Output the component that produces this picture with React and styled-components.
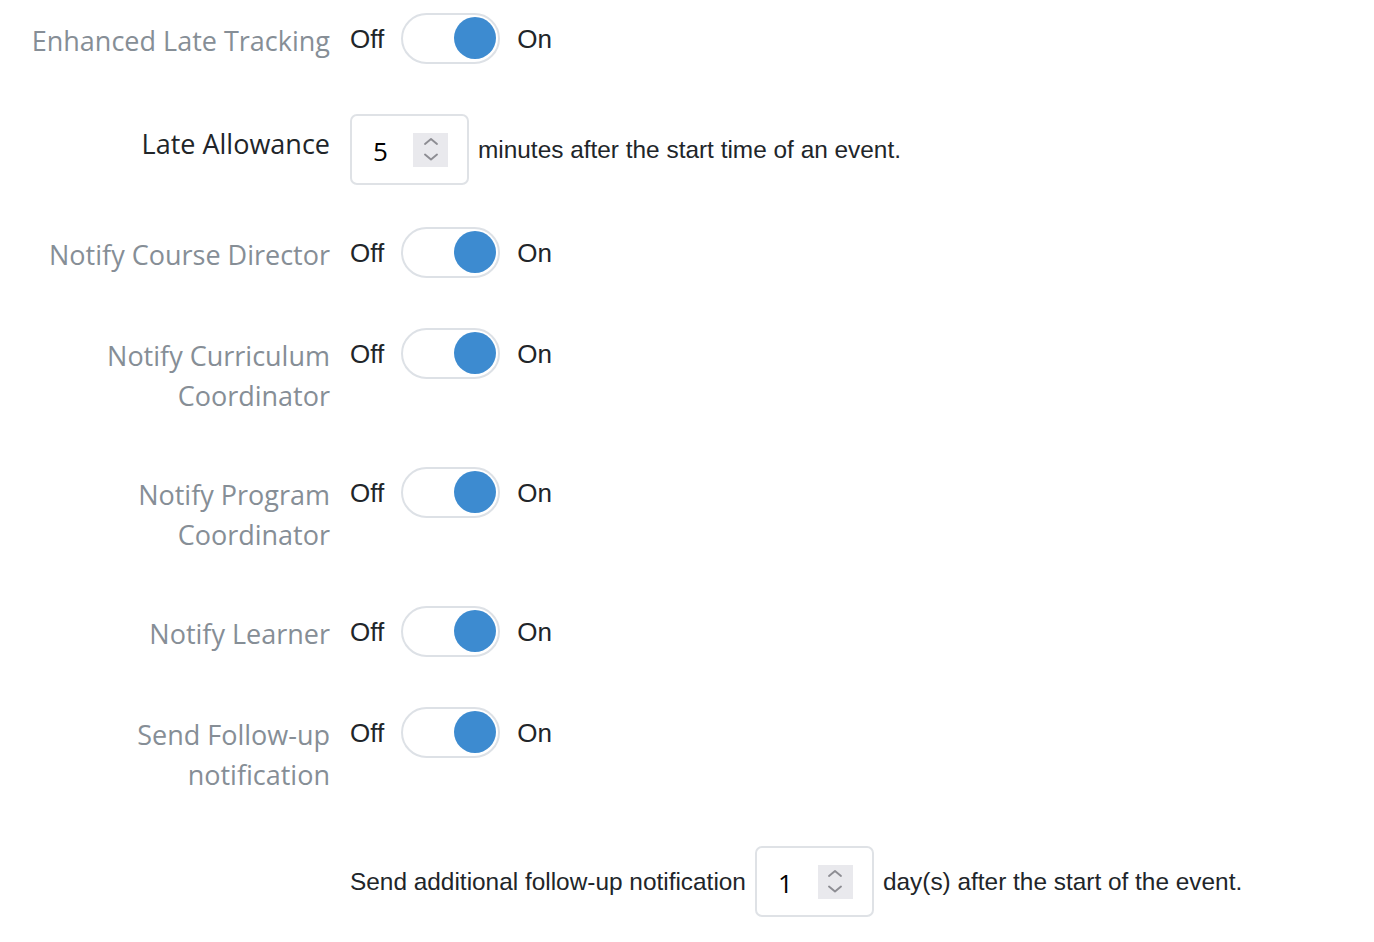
import React from "react";
import styled, { createGlobalStyle } from "styled-components";

const GlobalStyle = createGlobalStyle`
  body {
    margin: 0;
    background: #fff;
    font-family: "Liberation Sans", Arial, sans-serif;
  }
`;

const toggles = [
  { id: "late", label: "Enhanced Late Tracking" },
];

const notifyRows = [
  "Notify Course Director",
  "Notify Curriculum Coordinator",
  "Notify Program Coordinator",
  "Notify Learner",
  "Send Follow-up notification",
];

const Switch = () => (
  <Control>
    <SwitchText>Off</SwitchText>
    <Track>
      <Knob />
    </Track>
    <SwitchText>On</SwitchText>
  </Control>
);

const NumberBox = ({ value }) => (
  <Box>
    <BoxValue>{value}</BoxValue>
    <Spinner>
      <svg width="16" height="28" viewBox="0 0 16 28" fill="none">
        <path d="M2 8 L8 3 L14 8" stroke="#8d8d93" strokeWidth="1.9" strokeLinecap="round" strokeLinejoin="round" />
        <path d="M2 18.5 L8 23.5 L14 18.5" stroke="#8d8d93" strokeWidth="1.9" strokeLinecap="round" strokeLinejoin="round" />
      </svg>
    </Spinner>
  </Box>
);

export default function App() {
  return (
    <>
      <GlobalStyle />
      <Page>
        {toggles.map((t) => (
          <Row key={t.id}>
            <Label>{t.label}</Label>
            <Switch />
          </Row>
        ))}

        <Row $space={42}>
          <Label $dark $top={10}>Late Allowance</Label>
          <Inline>
            <NumberBox value="5" />
            <Hint>minutes after the start time of an event.</Hint>
          </Inline>
        </Row>

        {notifyRows.map((label) => (
          <Row key={label}>
            <Label>{label}</Label>
            <Switch />
          </Row>
        ))}

        <Row $space={0}>
          <Spacer />
          <Inline>
            <Hint>Send additional follow-up notification</Hint>
            <NumberBox value="1" />
            <Hint>day(s) after the start of the event.</Hint>
          </Inline>
        </Row>
      </Page>
    </>
  );
}

const Page = styled.div`
  padding: 13px 0 24px;
`;

const Row = styled.div`
  display: flex;
  align-items: flex-start;
  gap: 20px;
  margin-bottom: ${(p) => (p.$space ?? 51)}px;
`;

const Label = styled.div`
  box-sizing: border-box;
  width: 330px;
  padding-left: 20px;
  padding-top: ${(p) => p.$top ?? 8}px;
  text-align: right;
  font-family: "Open Sans", "Noto Sans", sans-serif;
  font-size: 27px;
  line-height: 40px;
  color: ${(p) => (p.$dark ? "#212529" : "#868e96")};
`;

const Spacer = styled.div`
  width: 330px;
  flex: none;
`;

const Control = styled.div`
  display: flex;
  align-items: center;
  gap: 17px;
  height: 50px;
`;

const SwitchText = styled.span`
  font-size: 26px;
  color: #212529;
  line-height: 1;
  margin-top: 2px;
`;

const Track = styled.div`
  box-sizing: border-box;
  width: 99px;
  height: 51px;
  border: 2px solid #dde1e6;
  border-radius: 26px;
  display: flex;
  align-items: center;
  justify-content: flex-end;
  padding-right: 2px;
  background: #fff;
`;

const Knob = styled.div`
  width: 42px;
  height: 42px;
  border-radius: 50%;
  background: #3d8bd0;
`;

const Inline = styled.div`
  display: flex;
  align-items: center;
  gap: 9px;
`;

const Hint = styled.span`
  font-size: 24.4px;
  color: #212529;
`;

const Box = styled.div`
  box-sizing: border-box;
  width: 119px;
  height: 71px;
  border: 2px solid #dfe2e6;
  border-radius: 7px;
  display: flex;
  align-items: center;
  padding-left: 21px;
`;

const BoxValue = styled.span`
  width: 40px;
  font-family: "Open Sans", "Noto Sans", sans-serif;
  font-size: 26px;
  color: #000;
  margin-top: 2px;
`;

const Spinner = styled.span`
  width: 35px;
  height: 34px;
  background: #e9e9ed;
  display: flex;
  align-items: center;
  justify-content: center;
`;
